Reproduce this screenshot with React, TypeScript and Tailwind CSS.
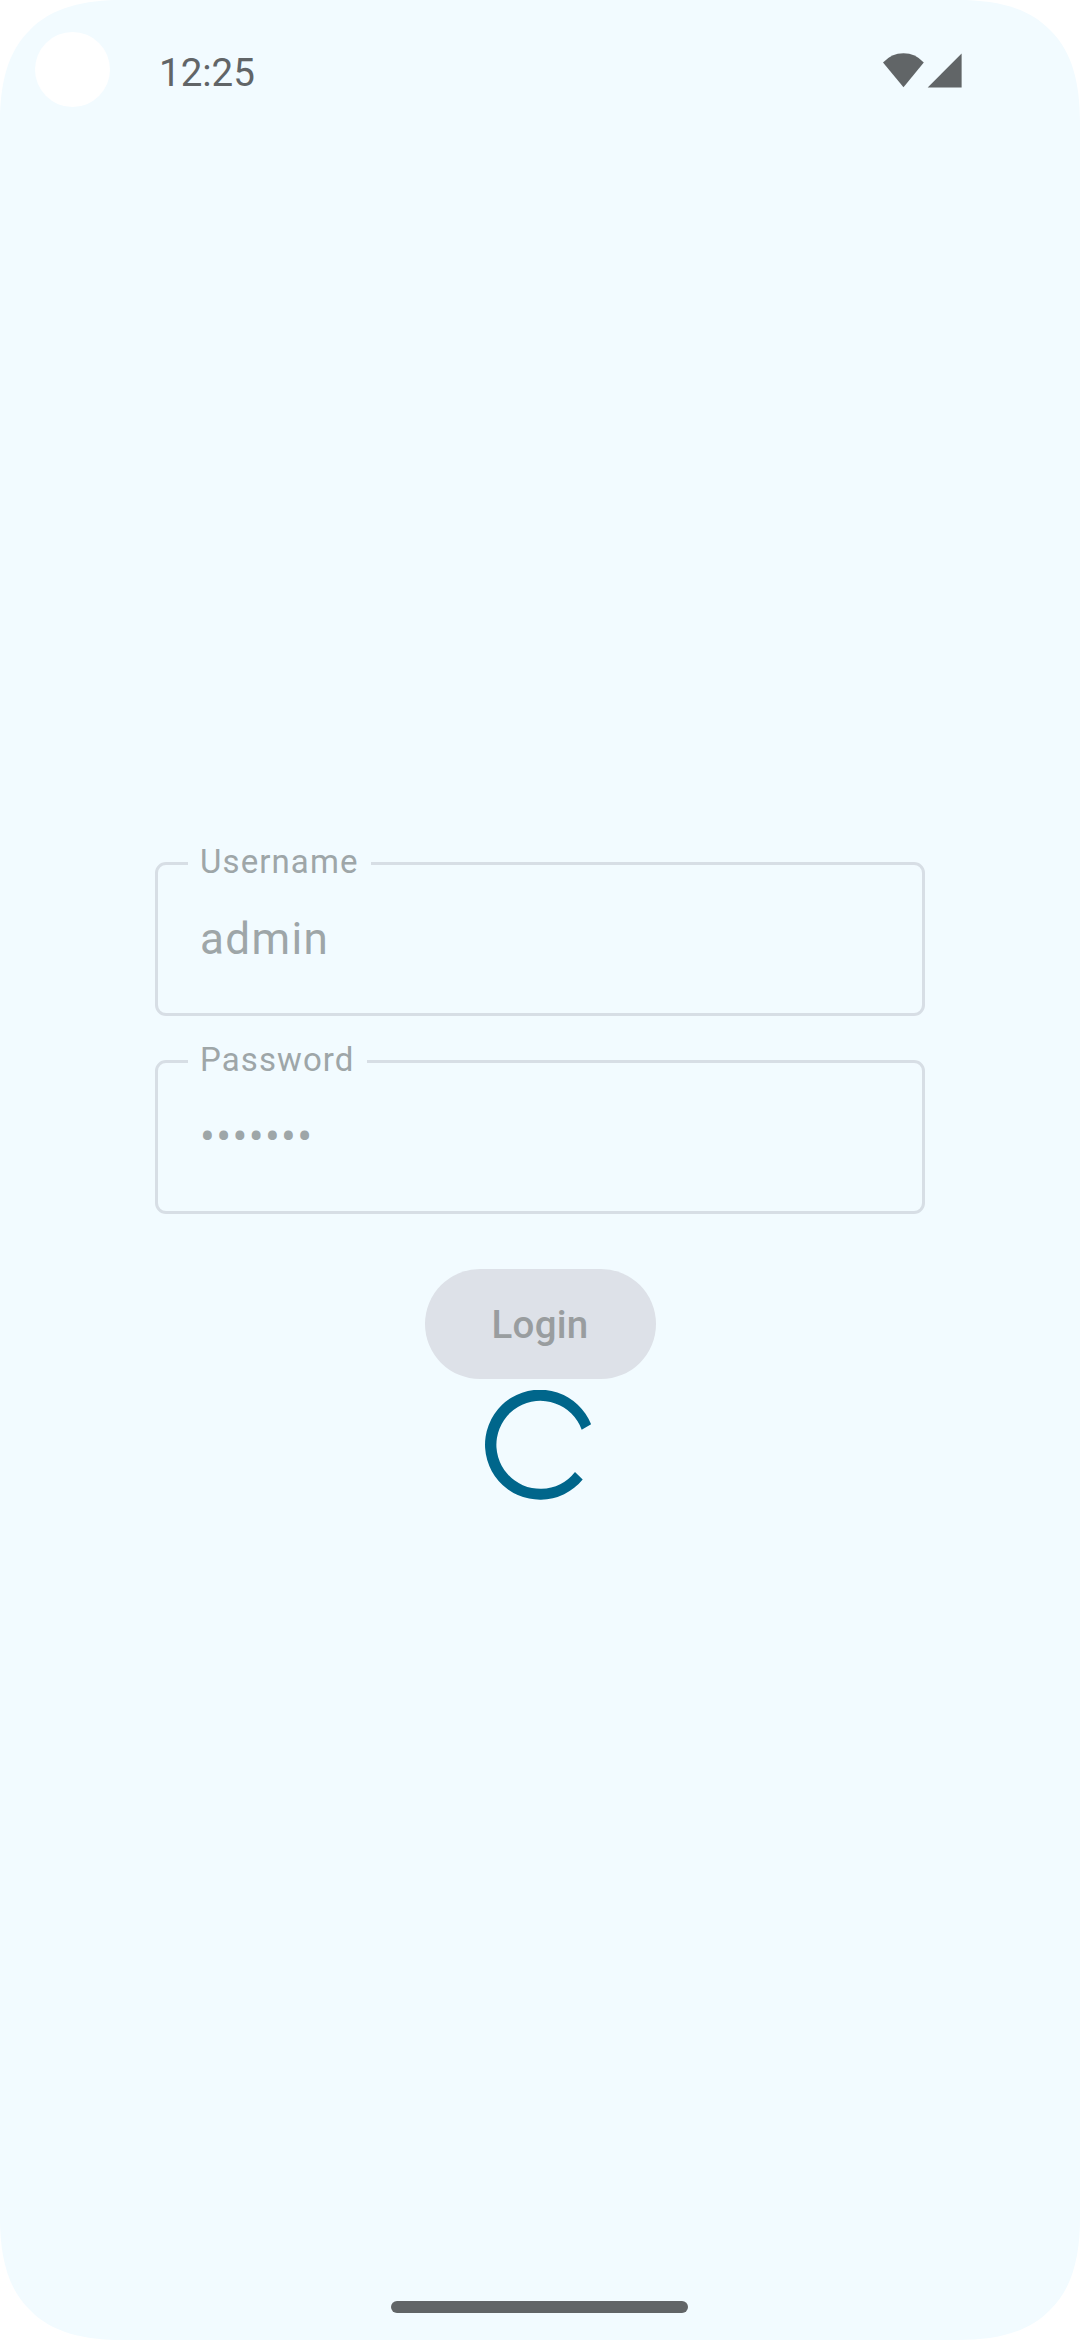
import React from 'react';

type FieldProps = { label: string; value: string; type: 'text' | 'password' };

function OutlinedField({ label, value, type }: FieldProps) {
  return (
    <div className="relative flex h-[154px] w-[770px] rounded-[11px] border-[3px] border-[#d7dee5] pl-[42px]">
      <span className="absolute -top-[25px] left-[30px] bg-[#f2fbff] pl-[12px] pr-[12px] text-[33px] leading-[44px] tracking-[1.1px] text-[#9ea6a8]">
        {label}
      </span>
      <span className="mt-[41px] text-[44px] leading-[66px] tracking-[1.375px] text-[#9ea6a8]">
        {type === 'password' ? '•'.repeat(value.length) : value}
      </span>
    </div>
  );
}

function StatusBar() {
  return (
    <header className="flex h-[140px] items-start justify-between pl-[35px] pr-[118px]">
      <div className="flex">
        <div className="mt-8 size-[75px] rounded-full bg-white" />
        <span className="ml-[49px] mt-[50px] text-[38.5px] leading-[46px] text-[#616567]">12:25</span>
      </div>
      <svg className="mt-[52px]" width="80" height="36" viewBox="0 0 80 36" fill="#616567">
        <path d="M21.5 35.3 1 10.5Q9.5 1.2 21.5 1.2T41.8 10.5Z" />
        <path d="M45.7 35.5 79.6 1.5V35.5Z" />
      </svg>
    </header>
  );
}

function ScreenCorner({ className }: { className: string }) {
  return (
    <svg className={`absolute ${className}`} width="122" height="122" viewBox="0 0 122 122" fill="#fff">
      <path d="M0 0H122C85 0 52 7 30 30C7 52 0 85 0 122Z" />
    </svg>
  );
}

export default function App() {
  return (
    <div className="min-h-[2340px] w-[1080px] bg-white font-['Roboto',sans-serif]">
      <div className="relative flex h-[2340px] flex-col overflow-hidden bg-[#f2fbff]">
        <StatusBar />
        <main className="mt-[722px] flex flex-1 flex-col items-center">
          <OutlinedField label="Username" value="admin" type="text" />
          <div className="h-[44px]" />
          <OutlinedField label="Password" value="letmein" type="password" />
          <button className="mt-[55px] h-[110px] w-[231px] rounded-full bg-[#dde1e8] pt-px text-[38.5px] font-medium tracking-[0.275px] text-[#999d9f]">
            Login
          </button>
          <svg className="mt-[11px]" width="110" height="110" viewBox="0 0 110 110" fill="#00668b">
            <path d="M106.1 34.3A55 55 0 1 0 97.7 89.4L90 82A44 44 0 1 1 96.7 39.7Z" />
          </svg>
        </main>
        <div className="mb-[27.5px] ml-[391px] h-[11.5px] w-[297px] rounded-full bg-[#616567]" />
        <ScreenCorner className="left-0 top-0" />
        <ScreenCorner className="right-0 top-0 -scale-x-100" />
        <ScreenCorner className="bottom-0 left-0 -scale-y-100" />
        <ScreenCorner className="bottom-0 right-0 rotate-180" />
      </div>
    </div>
  );
}
